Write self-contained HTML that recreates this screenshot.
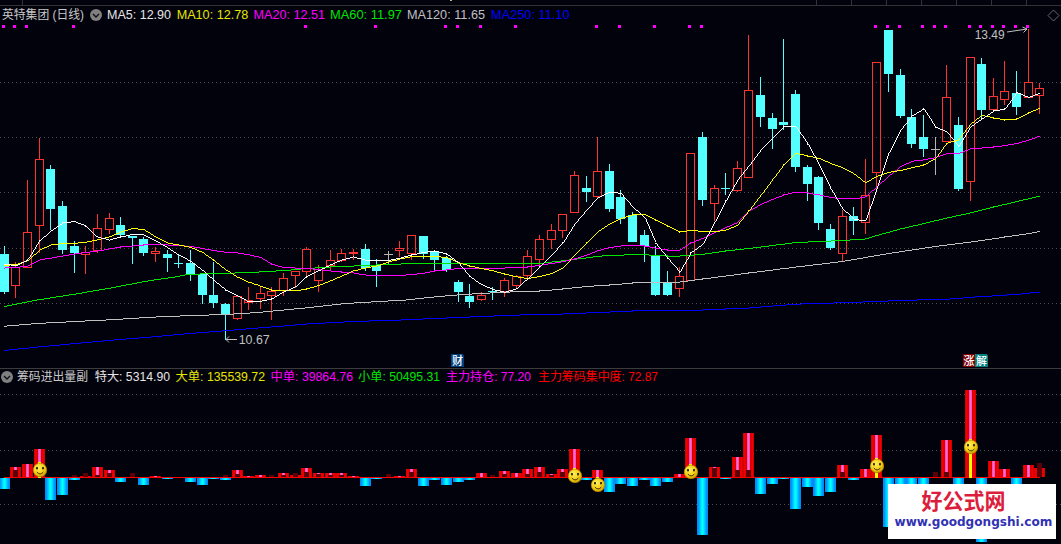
<!DOCTYPE html><html><head><meta charset="utf-8"><title>chart</title><style>
html,body{margin:0;padding:0;background:#02020d;overflow:hidden}
svg{display:block;position:absolute;left:0;top:0}
text{font-family:"Liberation Sans","Noto Sans CJK SC",sans-serif;font-size:12px}
.mk{font-size:11px;font-weight:500}
.wm1{font-family:"Liberation Sans","Noto Sans CJK SC",sans-serif;font-weight:bold;font-size:22px}
.wm2{font-family:"DejaVu Sans","Liberation Sans",sans-serif;font-weight:bold;font-size:12px}
</style></head><body>
<svg width="1061" height="544" viewBox="0 0 1061 544">
<defs>
<linearGradient id="gr" x1="0" x2="1" y1="0" y2="0"><stop offset="0.0000" stop-color="#d40000"/><stop offset="0.0909" stop-color="#d40000"/><stop offset="0.0909" stop-color="#f00000"/><stop offset="0.1818" stop-color="#f00000"/><stop offset="0.1818" stop-color="#e80000"/><stop offset="0.2727" stop-color="#e80000"/><stop offset="0.2727" stop-color="#d80000"/><stop offset="0.3636" stop-color="#d80000"/><stop offset="0.3636" stop-color="#ff50be"/><stop offset="0.4545" stop-color="#ff50be"/><stop offset="0.4545" stop-color="#ff6ed2"/><stop offset="0.5455" stop-color="#ff6ed2"/><stop offset="0.5455" stop-color="#ff50be"/><stop offset="0.6364" stop-color="#ff50be"/><stop offset="0.6364" stop-color="#d80000"/><stop offset="0.7273" stop-color="#d80000"/><stop offset="0.7273" stop-color="#e80000"/><stop offset="0.8182" stop-color="#e80000"/><stop offset="0.8182" stop-color="#f00000"/><stop offset="0.9091" stop-color="#f00000"/><stop offset="0.9091" stop-color="#d40000"/><stop offset="1.0000" stop-color="#d40000"/></linearGradient>
<linearGradient id="gc" x1="0" x2="1" y1="0" y2="0"><stop offset="0.0000" stop-color="#008cf5"/><stop offset="0.0909" stop-color="#008cf5"/><stop offset="0.0909" stop-color="#0096ff"/><stop offset="0.1818" stop-color="#0096ff"/><stop offset="0.1818" stop-color="#00b4ff"/><stop offset="0.2727" stop-color="#00b4ff"/><stop offset="0.2727" stop-color="#00d2ff"/><stop offset="0.3636" stop-color="#00d2ff"/><stop offset="0.3636" stop-color="#00f0ff"/><stop offset="0.4545" stop-color="#00f0ff"/><stop offset="0.4545" stop-color="#00ffff"/><stop offset="0.5455" stop-color="#00ffff"/><stop offset="0.5455" stop-color="#00f0ff"/><stop offset="0.6364" stop-color="#00f0ff"/><stop offset="0.6364" stop-color="#00d2ff"/><stop offset="0.7273" stop-color="#00d2ff"/><stop offset="0.7273" stop-color="#00b4ff"/><stop offset="0.8182" stop-color="#00b4ff"/><stop offset="0.8182" stop-color="#0096ff"/><stop offset="0.9091" stop-color="#0096ff"/><stop offset="0.9091" stop-color="#008cf5"/><stop offset="1.0000" stop-color="#008cf5"/></linearGradient>
<radialGradient id="gs" cx="0.4" cy="0.35" r="0.7"><stop offset="0" stop-color="#fff060"/><stop offset="0.6" stop-color="#f4cc10"/><stop offset="1" stop-color="#c89600"/></radialGradient>
<g id="sm"><circle cx="0" cy="0" r="7" fill="url(#gs)"/><circle cx="0" cy="0" r="6.7" fill="none" stroke="#7a6200" stroke-opacity="0.55" stroke-width="0.7"/><rect x="-4" y="-2.9" width="2" height="2.2" fill="#3a2c00"/><rect x="2" y="-2.9" width="2" height="2.2" fill="#3a2c00"/><path d="M-2.9 2.3 Q0.1 5.9 3.1 2.3" fill="none" stroke="#3a2c00" stroke-width="0.95" stroke-linecap="round"/></g>
</defs>
<rect x="0" y="0" width="1061" height="544" fill="#02020d"/>
<g shape-rendering="crispEdges">
<rect x="0" y="5" width="1061" height="1" fill="#333333"/>
<rect x="450" y="0" width="1" height="1" fill="#9ec4e6"/><rect x="451" y="0" width="1" height="1" fill="#d89a50"/>
<rect x="22" y="0" width="1" height="5" fill="#333333"/>
<rect x="816" y="0" width="1" height="5" fill="#333333"/>
<rect x="851" y="0" width="1" height="5" fill="#333333"/>
<rect x="886" y="0" width="1" height="5" fill="#333333"/>
<rect x="921" y="0" width="1" height="5" fill="#333333"/>
<rect x="956" y="0" width="1" height="5" fill="#333333"/>
<rect x="991" y="0" width="1" height="5" fill="#333333"/>
<rect x="1026" y="0" width="1" height="5" fill="#333333"/>
<rect x="0" y="368" width="1061" height="1" fill="#3c3c3c"/>
<line x1="0" y1="82.5" x2="1061" y2="82.5" stroke="#4c4c4c" stroke-width="1" stroke-dasharray="1 3"/>
<line x1="0" y1="137.5" x2="1061" y2="137.5" stroke="#4c4c4c" stroke-width="1" stroke-dasharray="1 3"/>
<line x1="0" y1="192.5" x2="1061" y2="192.5" stroke="#4c4c4c" stroke-width="1" stroke-dasharray="1 3"/>
<line x1="0" y1="248.5" x2="1061" y2="248.5" stroke="#4c4c4c" stroke-width="1" stroke-dasharray="1 3"/>
<line x1="0" y1="303.5" x2="1061" y2="303.5" stroke="#4c4c4c" stroke-width="1" stroke-dasharray="1 3"/>
<line x1="0" y1="394.5" x2="1061" y2="394.5" stroke="#4c4c4c" stroke-width="1" stroke-dasharray="1 3"/>
<line x1="0" y1="422.5" x2="1061" y2="422.5" stroke="#4c4c4c" stroke-width="1" stroke-dasharray="1 3"/>
<line x1="0" y1="450.5" x2="1061" y2="450.5" stroke="#4c4c4c" stroke-width="1" stroke-dasharray="1 3"/>
<line x1="0" y1="504.5" x2="1061" y2="504.5" stroke="#4c4c4c" stroke-width="1" stroke-dasharray="1 3"/>
</g>
<g shape-rendering="crispEdges">
<rect x="0" y="254" width="9" height="38" fill="#54ffff"/>
<rect x="4" y="246" width="1" height="8" fill="#54ffff"/>
<rect x="4" y="292" width="1" height="2" fill="#54ffff"/>
<rect x="11.5" y="267.5" width="8" height="18" fill="none" stroke="#ff3232" stroke-width="1"/>
<rect x="15" y="262" width="1" height="5" fill="#ff3232"/>
<rect x="15" y="286" width="1" height="12" fill="#ff3232"/>
<rect x="23.5" y="232.5" width="8" height="35" fill="none" stroke="#ff3232" stroke-width="1"/>
<rect x="27" y="180" width="1" height="52" fill="#ff3232"/>
<rect x="35.5" y="159.5" width="8" height="66" fill="none" stroke="#ff3232" stroke-width="1"/>
<rect x="39" y="138" width="1" height="21" fill="#ff3232"/>
<rect x="39" y="226" width="1" height="27" fill="#ff3232"/>
<rect x="46" y="169" width="9" height="40" fill="#54ffff"/>
<rect x="50" y="165" width="1" height="4" fill="#54ffff"/>
<rect x="50" y="209" width="1" height="21" fill="#54ffff"/>
<rect x="58" y="206" width="9" height="44" fill="#54ffff"/>
<rect x="62" y="201" width="1" height="5" fill="#54ffff"/>
<rect x="62" y="250" width="1" height="4" fill="#54ffff"/>
<rect x="70" y="246" width="9" height="7" fill="#54ffff"/>
<rect x="74" y="241" width="1" height="5" fill="#54ffff"/>
<rect x="74" y="253" width="1" height="20" fill="#54ffff"/>
<rect x="81.5" y="252.5" width="8" height="2" fill="none" stroke="#ff3232" stroke-width="1"/>
<rect x="85" y="246" width="1" height="6" fill="#ff3232"/>
<rect x="85" y="255" width="1" height="19" fill="#ff3232"/>
<rect x="93.5" y="228.5" width="8" height="22" fill="none" stroke="#ff3232" stroke-width="1"/>
<rect x="97" y="214" width="1" height="14" fill="#ff3232"/>
<rect x="97" y="251" width="1" height="2" fill="#ff3232"/>
<rect x="105.5" y="218.5" width="8" height="11" fill="none" stroke="#ff3232" stroke-width="1"/>
<rect x="109" y="213" width="1" height="5" fill="#ff3232"/>
<rect x="109" y="230" width="1" height="4" fill="#ff3232"/>
<rect x="116" y="225" width="9" height="10" fill="#54ffff"/>
<rect x="120" y="217" width="1" height="8" fill="#54ffff"/>
<rect x="120" y="235" width="1" height="1" fill="#54ffff"/>
<rect x="128" y="236" width="9" height="2" fill="#54ffff"/>
<rect x="132" y="238" width="1" height="26" fill="#54ffff"/>
<rect x="139" y="239" width="9" height="14" fill="#54ffff"/>
<rect x="143" y="237" width="1" height="2" fill="#54ffff"/>
<rect x="143" y="253" width="1" height="3" fill="#54ffff"/>
<rect x="151.5" y="251.5" width="8" height="2" fill="none" stroke="#ff3232" stroke-width="1"/>
<rect x="155" y="247" width="1" height="4" fill="#ff3232"/>
<rect x="155" y="254" width="1" height="8" fill="#ff3232"/>
<rect x="163" y="254" width="9" height="4" fill="#54ffff"/>
<rect x="167" y="250" width="1" height="4" fill="#54ffff"/>
<rect x="167" y="258" width="1" height="14" fill="#54ffff"/>
<rect x="178" y="255" width="1" height="13" fill="#54ffff"/>
<rect x="174" y="263" width="9" height="1" fill="#54ffff"/>
<rect x="186" y="263" width="9" height="11" fill="#54ffff"/>
<rect x="190" y="250" width="1" height="13" fill="#54ffff"/>
<rect x="190" y="274" width="1" height="7" fill="#54ffff"/>
<rect x="198" y="274" width="9" height="21" fill="#54ffff"/>
<rect x="202" y="295" width="1" height="9" fill="#54ffff"/>
<rect x="209" y="295" width="9" height="8" fill="#54ffff"/>
<rect x="213" y="262" width="1" height="33" fill="#54ffff"/>
<rect x="213" y="303" width="1" height="5" fill="#54ffff"/>
<rect x="221" y="304" width="9" height="10" fill="#54ffff"/>
<rect x="225" y="303" width="1" height="1" fill="#54ffff"/>
<rect x="225" y="314" width="1" height="26" fill="#54ffff"/>
<rect x="233.5" y="296.5" width="8" height="22" fill="none" stroke="#ff3232" stroke-width="1"/>
<rect x="237" y="319" width="1" height="1" fill="#ff3232"/>
<rect x="244.5" y="300.5" width="8" height="2" fill="none" stroke="#ff3232" stroke-width="1"/>
<rect x="248" y="287" width="1" height="13" fill="#ff3232"/>
<rect x="248" y="303" width="1" height="7" fill="#ff3232"/>
<rect x="256.5" y="293.5" width="8" height="5" fill="none" stroke="#ff3232" stroke-width="1"/>
<rect x="260" y="286" width="1" height="7" fill="#ff3232"/>
<rect x="260" y="299" width="1" height="10" fill="#ff3232"/>
<rect x="267.5" y="291.5" width="8" height="4" fill="none" stroke="#ff3232" stroke-width="1"/>
<rect x="271" y="287" width="1" height="4" fill="#ff3232"/>
<rect x="271" y="296" width="1" height="24" fill="#ff3232"/>
<rect x="279.5" y="278.5" width="8" height="12" fill="none" stroke="#ff3232" stroke-width="1"/>
<rect x="283" y="273" width="1" height="5" fill="#ff3232"/>
<rect x="283" y="291" width="1" height="5" fill="#ff3232"/>
<rect x="291.5" y="271.5" width="8" height="4" fill="none" stroke="#ff3232" stroke-width="1"/>
<rect x="295" y="276" width="1" height="12" fill="#ff3232"/>
<rect x="302.5" y="249.5" width="8" height="22" fill="none" stroke="#ff3232" stroke-width="1"/>
<rect x="306" y="247" width="1" height="2" fill="#ff3232"/>
<rect x="306" y="272" width="1" height="4" fill="#ff3232"/>
<rect x="314.5" y="269.5" width="8" height="11" fill="none" stroke="#ff3232" stroke-width="1"/>
<rect x="318" y="265" width="1" height="4" fill="#ff3232"/>
<rect x="318" y="281" width="1" height="11" fill="#ff3232"/>
<rect x="326.5" y="260.5" width="8" height="5" fill="none" stroke="#ff3232" stroke-width="1"/>
<rect x="330" y="250" width="1" height="10" fill="#ff3232"/>
<rect x="330" y="266" width="1" height="4" fill="#ff3232"/>
<rect x="337.5" y="253.5" width="8" height="7" fill="none" stroke="#ff3232" stroke-width="1"/>
<rect x="341" y="249" width="1" height="4" fill="#ff3232"/>
<rect x="341" y="261" width="1" height="1" fill="#ff3232"/>
<rect x="349.5" y="252.5" width="8" height="1" fill="none" stroke="#ff3232" stroke-width="1"/>
<rect x="353" y="249" width="1" height="3" fill="#ff3232"/>
<rect x="353" y="254" width="1" height="6" fill="#ff3232"/>
<rect x="361" y="249" width="9" height="19" fill="#54ffff"/>
<rect x="365" y="244" width="1" height="5" fill="#54ffff"/>
<rect x="365" y="268" width="1" height="3" fill="#54ffff"/>
<rect x="372" y="265" width="9" height="6" fill="#54ffff"/>
<rect x="376" y="259" width="1" height="6" fill="#54ffff"/>
<rect x="376" y="271" width="1" height="16" fill="#54ffff"/>
<rect x="388" y="251" width="1" height="13" fill="#b4b4b4"/>
<rect x="384" y="254" width="9" height="1" fill="#b4b4b4"/>
<rect x="395.5" y="248.5" width="8" height="2" fill="none" stroke="#ff3232" stroke-width="1"/>
<rect x="399" y="241" width="1" height="7" fill="#ff3232"/>
<rect x="399" y="251" width="1" height="6" fill="#ff3232"/>
<rect x="407.5" y="235.5" width="8" height="18" fill="none" stroke="#ff3232" stroke-width="1"/>
<rect x="411" y="254" width="1" height="6" fill="#ff3232"/>
<rect x="419" y="236" width="9" height="18" fill="#54ffff"/>
<rect x="423" y="254" width="1" height="5" fill="#54ffff"/>
<rect x="430" y="252" width="9" height="8" fill="#54ffff"/>
<rect x="434" y="250" width="1" height="2" fill="#54ffff"/>
<rect x="434" y="260" width="1" height="11" fill="#54ffff"/>
<rect x="442" y="258" width="9" height="12" fill="#54ffff"/>
<rect x="446" y="256" width="1" height="2" fill="#54ffff"/>
<rect x="446" y="270" width="1" height="2" fill="#54ffff"/>
<rect x="454" y="282" width="9" height="10" fill="#54ffff"/>
<rect x="458" y="280" width="1" height="2" fill="#54ffff"/>
<rect x="458" y="292" width="1" height="10" fill="#54ffff"/>
<rect x="465" y="296" width="9" height="6" fill="#54ffff"/>
<rect x="469" y="284" width="1" height="12" fill="#54ffff"/>
<rect x="469" y="302" width="1" height="6" fill="#54ffff"/>
<rect x="477.5" y="295.5" width="8" height="4" fill="none" stroke="#ff3232" stroke-width="1"/>
<rect x="481" y="292" width="1" height="3" fill="#ff3232"/>
<rect x="481" y="300" width="1" height="1" fill="#ff3232"/>
<rect x="492" y="287" width="1" height="13" fill="#54ffff"/>
<rect x="488" y="291" width="9" height="1" fill="#54ffff"/>
<rect x="500.5" y="280.5" width="8" height="11" fill="none" stroke="#ff3232" stroke-width="1"/>
<rect x="504" y="278" width="1" height="2" fill="#ff3232"/>
<rect x="504" y="292" width="1" height="5" fill="#ff3232"/>
<rect x="512.5" y="276.5" width="8" height="9" fill="none" stroke="#ff3232" stroke-width="1"/>
<rect x="516" y="275" width="1" height="1" fill="#ff3232"/>
<rect x="516" y="286" width="1" height="3" fill="#ff3232"/>
<rect x="523.5" y="256.5" width="8" height="19" fill="none" stroke="#ff3232" stroke-width="1"/>
<rect x="527" y="250" width="1" height="6" fill="#ff3232"/>
<rect x="527" y="276" width="1" height="3" fill="#ff3232"/>
<rect x="535.5" y="239.5" width="8" height="20" fill="none" stroke="#ff3232" stroke-width="1"/>
<rect x="539" y="235" width="1" height="4" fill="#ff3232"/>
<rect x="539" y="260" width="1" height="6" fill="#ff3232"/>
<rect x="547.5" y="230.5" width="8" height="9" fill="none" stroke="#ff3232" stroke-width="1"/>
<rect x="551" y="224" width="1" height="6" fill="#ff3232"/>
<rect x="551" y="240" width="1" height="9" fill="#ff3232"/>
<rect x="558.5" y="214.5" width="8" height="16" fill="none" stroke="#ff3232" stroke-width="1"/>
<rect x="562" y="231" width="1" height="7" fill="#ff3232"/>
<rect x="570.5" y="175.5" width="8" height="37" fill="none" stroke="#ff3232" stroke-width="1"/>
<rect x="574" y="171" width="1" height="4" fill="#ff3232"/>
<rect x="582" y="188" width="9" height="4" fill="#54ffff"/>
<rect x="586" y="176" width="1" height="12" fill="#54ffff"/>
<rect x="586" y="192" width="1" height="10" fill="#54ffff"/>
<rect x="593.5" y="171.5" width="8" height="25" fill="none" stroke="#ff3232" stroke-width="1"/>
<rect x="597" y="137" width="1" height="34" fill="#ff3232"/>
<rect x="597" y="197" width="1" height="2" fill="#ff3232"/>
<rect x="605" y="171" width="9" height="38" fill="#54ffff"/>
<rect x="609" y="164" width="1" height="7" fill="#54ffff"/>
<rect x="609" y="209" width="1" height="3" fill="#54ffff"/>
<rect x="616" y="197" width="9" height="22" fill="#54ffff"/>
<rect x="620" y="190" width="1" height="7" fill="#54ffff"/>
<rect x="620" y="219" width="1" height="5" fill="#54ffff"/>
<rect x="628" y="215" width="9" height="27" fill="#54ffff"/>
<rect x="632" y="212" width="1" height="3" fill="#54ffff"/>
<rect x="640" y="235" width="9" height="11" fill="#54ffff"/>
<rect x="644" y="230" width="1" height="5" fill="#54ffff"/>
<rect x="644" y="246" width="1" height="16" fill="#54ffff"/>
<rect x="651" y="256" width="9" height="39" fill="#54ffff"/>
<rect x="655" y="246" width="1" height="10" fill="#54ffff"/>
<rect x="655" y="295" width="1" height="1" fill="#54ffff"/>
<rect x="663" y="282" width="9" height="13" fill="#54ffff"/>
<rect x="667" y="271" width="1" height="11" fill="#54ffff"/>
<rect x="667" y="295" width="1" height="1" fill="#54ffff"/>
<rect x="675.5" y="276.5" width="8" height="12" fill="none" stroke="#ff3232" stroke-width="1"/>
<rect x="679" y="267" width="1" height="9" fill="#ff3232"/>
<rect x="679" y="289" width="1" height="8" fill="#ff3232"/>
<rect x="686.5" y="153.5" width="8" height="127" fill="none" stroke="#ff3232" stroke-width="1"/>
<rect x="698" y="137" width="9" height="63" fill="#54ffff"/>
<rect x="702" y="132" width="1" height="5" fill="#54ffff"/>
<rect x="702" y="200" width="1" height="6" fill="#54ffff"/>
<rect x="710.5" y="188.5" width="8" height="15" fill="none" stroke="#ff3232" stroke-width="1"/>
<rect x="714" y="185" width="1" height="3" fill="#ff3232"/>
<rect x="714" y="204" width="1" height="17" fill="#ff3232"/>
<rect x="725" y="173" width="1" height="22" fill="#54ffff"/>
<rect x="721" y="188" width="9" height="1" fill="#54ffff"/>
<rect x="733.5" y="168.5" width="8" height="22" fill="none" stroke="#ff3232" stroke-width="1"/>
<rect x="737" y="161" width="1" height="7" fill="#ff3232"/>
<rect x="737" y="191" width="1" height="1" fill="#ff3232"/>
<rect x="744.5" y="90.5" width="8" height="87" fill="none" stroke="#ff3232" stroke-width="1"/>
<rect x="748" y="35" width="1" height="55" fill="#ff3232"/>
<rect x="756" y="95" width="9" height="22" fill="#54ffff"/>
<rect x="760" y="77" width="1" height="18" fill="#54ffff"/>
<rect x="760" y="117" width="1" height="10" fill="#54ffff"/>
<rect x="768" y="118" width="9" height="11" fill="#54ffff"/>
<rect x="772" y="113" width="1" height="5" fill="#54ffff"/>
<rect x="772" y="129" width="1" height="20" fill="#54ffff"/>
<rect x="779" y="122" width="9" height="3" fill="#54ffff"/>
<rect x="783" y="39" width="1" height="83" fill="#54ffff"/>
<rect x="783" y="125" width="1" height="5" fill="#54ffff"/>
<rect x="791" y="94" width="9" height="73" fill="#54ffff"/>
<rect x="795" y="90" width="1" height="4" fill="#54ffff"/>
<rect x="795" y="167" width="1" height="5" fill="#54ffff"/>
<rect x="803" y="167" width="9" height="17" fill="#54ffff"/>
<rect x="807" y="165" width="1" height="2" fill="#54ffff"/>
<rect x="807" y="184" width="1" height="17" fill="#54ffff"/>
<rect x="814" y="177" width="9" height="46" fill="#54ffff"/>
<rect x="818" y="176" width="1" height="1" fill="#54ffff"/>
<rect x="818" y="223" width="1" height="7" fill="#54ffff"/>
<rect x="826" y="229" width="9" height="19" fill="#54ffff"/>
<rect x="830" y="224" width="1" height="5" fill="#54ffff"/>
<rect x="830" y="248" width="1" height="2" fill="#54ffff"/>
<rect x="838.5" y="216.5" width="8" height="37" fill="none" stroke="#ff3232" stroke-width="1"/>
<rect x="842" y="210" width="1" height="6" fill="#ff3232"/>
<rect x="842" y="254" width="1" height="7" fill="#ff3232"/>
<rect x="849" y="216" width="9" height="5" fill="#54ffff"/>
<rect x="853" y="207" width="1" height="9" fill="#54ffff"/>
<rect x="853" y="221" width="1" height="14" fill="#54ffff"/>
<rect x="861.5" y="195.5" width="8" height="27" fill="none" stroke="#ff3232" stroke-width="1"/>
<rect x="865" y="159" width="1" height="36" fill="#ff3232"/>
<rect x="865" y="223" width="1" height="11" fill="#ff3232"/>
<rect x="872.5" y="62.5" width="8" height="110" fill="none" stroke="#ff3232" stroke-width="1"/>
<rect x="876" y="173" width="1" height="19" fill="#ff3232"/>
<rect x="884" y="30" width="9" height="44" fill="#54ffff"/>
<rect x="888" y="74" width="1" height="18" fill="#54ffff"/>
<rect x="896" y="75" width="9" height="41" fill="#54ffff"/>
<rect x="900" y="69" width="1" height="6" fill="#54ffff"/>
<rect x="900" y="116" width="1" height="2" fill="#54ffff"/>
<rect x="907" y="117" width="9" height="27" fill="#54ffff"/>
<rect x="911" y="109" width="1" height="8" fill="#54ffff"/>
<rect x="911" y="144" width="1" height="4" fill="#54ffff"/>
<rect x="919" y="137" width="9" height="12" fill="#54ffff"/>
<rect x="923" y="115" width="1" height="22" fill="#54ffff"/>
<rect x="923" y="149" width="1" height="8" fill="#54ffff"/>
<rect x="935" y="137" width="1" height="38" fill="#b4b4b4"/>
<rect x="931" y="149" width="9" height="1" fill="#b4b4b4"/>
<rect x="942.5" y="97.5" width="8" height="44" fill="none" stroke="#ff3232" stroke-width="1"/>
<rect x="946" y="65" width="1" height="32" fill="#ff3232"/>
<rect x="954" y="125" width="9" height="64" fill="#54ffff"/>
<rect x="958" y="117" width="1" height="8" fill="#54ffff"/>
<rect x="958" y="189" width="1" height="2" fill="#54ffff"/>
<rect x="966.5" y="57.5" width="8" height="124" fill="none" stroke="#ff3232" stroke-width="1"/>
<rect x="970" y="182" width="1" height="19" fill="#ff3232"/>
<rect x="977" y="64" width="9" height="46" fill="#54ffff"/>
<rect x="981" y="58" width="1" height="6" fill="#54ffff"/>
<rect x="981" y="110" width="1" height="10" fill="#54ffff"/>
<rect x="989.5" y="96.5" width="8" height="13" fill="none" stroke="#ff3232" stroke-width="1"/>
<rect x="993" y="78" width="1" height="18" fill="#ff3232"/>
<rect x="1000.5" y="91.5" width="8" height="8" fill="none" stroke="#ff3232" stroke-width="1"/>
<rect x="1004" y="61" width="1" height="30" fill="#ff3232"/>
<rect x="1004" y="100" width="1" height="5" fill="#ff3232"/>
<rect x="1012" y="93" width="9" height="14" fill="#54ffff"/>
<rect x="1016" y="71" width="1" height="22" fill="#54ffff"/>
<rect x="1016" y="107" width="1" height="8" fill="#54ffff"/>
<rect x="1024.5" y="82.5" width="8" height="15" fill="none" stroke="#ff3232" stroke-width="1"/>
<rect x="1028" y="29" width="1" height="53" fill="#ff3232"/>
<rect x="1035.5" y="88.5" width="8" height="7" fill="none" stroke="#ff3232" stroke-width="1"/>
<rect x="1039" y="83" width="1" height="5" fill="#ff3232"/>
<rect x="1039" y="96" width="1" height="18" fill="#ff3232"/>
</g>
<path d="M271 326h13v1h-13zM196 332h13v1h-13zM773 305h13v1h-13zM162 335h11v1h-11zM725 308h24v1h-24zM184 333h12v1h-12zM520 314h43v1h-43zM423 318h24v1h-24zM834 302h29v1h-29zM632 310h71v1h-71zM9 349h9v1h-9zM151 336h11v1h-11zM81 342h11v1h-11zM401 319h22v1h-22zM888 300h29v1h-29zM470 316h24v1h-24zM863 301h25v1h-25zM173 334h11v1h-11zM103 340h11v1h-11zM258 327h13v1h-13zM447 317h23v1h-23zM563 313h23v1h-23zM703 309h23v1h-23zM38 346h11v1h-11zM494 315h26v1h-26zM325 322h19v1h-19zM801 303h33v1h-33zM1021 293h9v1h-9zM284 325h11v1h-11zM209 331h13v1h-13zM963 297h12v1h-12zM786 304h15v1h-15zM246 328h12v1h-12zM610 311h23v1h-23zM749 307h12v1h-12zM369 320h32v1h-32zM18 348h11v1h-11zM992 295h15v1h-15zM950 298h13v1h-13zM222 330h12v1h-12zM917 299h33v1h-33zM139 337h12v1h-12zM586 312h24v1h-24zM344 321h25v1h-25zM70 343h11v1h-11zM295 324h12v1h-12zM126 338h13v1h-13zM761 306h12v1h-12zM975 296h17v1h-17zM92 341h11v1h-11zM29 347h9v1h-9zM60 344h10v1h-10zM1007 294h14v1h-14zM307 323h18v1h-18zM234 329h12v1h-12zM49 345h11v1h-11zM1030 292h10v1h-10zM114 339h12v1h-12zM4 350h5v1h-5z" fill="#0000ff" shape-rendering="crispEdges"/>
<path d="M609 284h13v1h-13zM314 306h9v1h-9zM180 315h29v1h-29zM250 312h13v1h-13zM284 309h10v1h-10zM434 296h11v1h-11zM718 276h8v1h-8zM354 302h17v1h-17zM46 322h20v1h-20zM947 244h8v1h-8zM457 294h15v1h-15zM632 282h48v1h-48zM874 255h6v1h-6zM424 297h10v1h-10zM582 286h12v1h-12zM845 260h6v1h-6zM622 283h11v1h-11zM688 280h7v1h-7zM66 321h19v1h-19zM263 311h10v1h-10zM388 300h18v1h-18zM552 289h11v1h-11zM822 263h8v1h-8zM919 248h6v1h-6zM19 324h12v1h-12zM490 292h20v1h-20zM209 314h25v1h-25zM371 301h17v1h-17zM932 246h7v1h-7zM1037 231h3v1h-3zM156 316h24v1h-24zM332 304h9v1h-9zM472 293h18v1h-18zM868 256h6v1h-6zM880 254h6v1h-6zM985 239h7v1h-7zM106 319h17v1h-17zM734 274h7v1h-7zM539 290h13v1h-13zM813 264h9v1h-9zM905 250h7v1h-7zM925 247h7v1h-7zM510 291h30v1h-30zM726 275h8v1h-8zM139 317h17v1h-17zM955 243h8v1h-8zM971 241h7v1h-7zM123 318h16v1h-16zM999 237h6v1h-6zM773 269h7v1h-7zM562 288h10v1h-10zM273 310h11v1h-11zM830 262h8v1h-8zM594 285h16v1h-16zM892 252h7v1h-7zM939 245h8v1h-8zM234 313h16v1h-16zM963 242h8v1h-8zM711 277h7v1h-7zM4 326h3v1h-3zM341 303h13v1h-13zM992 238h7v1h-7zM741 273h8v1h-8zM445 295h12v1h-12zM1004 236h8v1h-8zM415 298h9v1h-9zM572 287h10v1h-10zM838 261h7v1h-7zM680 281h8v1h-8zM695 279h8v1h-8zM323 305h9v1h-9zM7 325h12v1h-12zM863 257h5v1h-5zM978 240h7v1h-7zM294 308h11v1h-11zM748 272h9v1h-9zM85 320h21v1h-21zM780 268h9v1h-9zM899 251h6v1h-6zM305 307h9v1h-9zM765 270h8v1h-8zM31 323h15v1h-15zM789 267h7v1h-7zM702 278h9v1h-9zM757 271h8v1h-8zM406 299h9v1h-9zM805 265h8v1h-8zM1026 233h6v1h-6zM857 258h6v1h-6zM796 266h9v1h-9zM912 249h7v1h-7zM1019 234h7v1h-7zM851 259h6v1h-6zM886 253h6v1h-6zM1012 235h7v1h-7zM1032 232h5v1h-5z" fill="#c0c0c0" shape-rendering="crispEdges"/>
<path d="M602 255h22v1h-22zM649 255h19v1h-19zM680 255h14v1h-14zM1023 199h5v1h-5zM376 264h25v1h-25zM886 232h4v1h-4zM993 206h5v1h-5zM401 263h143v1h-143zM961 214h5v1h-5zM725 250h10v1h-10zM99 289h6v1h-6zM185 274h15v1h-15zM137 282h5v1h-5zM69 294h7v1h-7zM831 240h19v1h-19zM761 246h8v1h-8zM1007 203h4v1h-4zM808 241h23v1h-23zM986 208h4v1h-4zM200 273h35v1h-35zM624 254h25v1h-25zM694 254h11v1h-11zM315 267h15v1h-15zM850 239h15v1h-15zM175 276h5v1h-5zM934 220h5v1h-5zM301 268h14v1h-14zM126 284h6v1h-6zM259 271h17v1h-17zM586 257h7v1h-7zM148 280h6v1h-6zM161 278h7v1h-7zM22 302h5v1h-5zM330 266h24v1h-24zM593 256h9v1h-9zM667 256h13v1h-13zM897 229h3v1h-3zM76 293h6v1h-6zM943 218h4v1h-4zM154 279h7v1h-7zM27 301h5v1h-5zM235 272h24v1h-24zM785 243h7v1h-7zM93 290h6v1h-6zM577 258h9v1h-9zM719 251h7v1h-7zM44 298h6v1h-6zM132 283h5v1h-5zM792 242h16v1h-16zM7 305h5v1h-5zM905 227h4v1h-4zM569 259h8v1h-8zM354 265h22v1h-22zM705 253h7v1h-7zM930 221h4v1h-4zM121 285h5v1h-5zM291 269h10v1h-10zM970 212h4v1h-4zM735 249h9v1h-9zM947 217h5v1h-5zM552 261h9v1h-9zM142 281h6v1h-6zM893 230h4v1h-4zM869 237h3v1h-3zM50 297h6v1h-6zM744 248h9v1h-9zM974 211h4v1h-4zM776 244h9v1h-9zM105 288h6v1h-6zM712 252h7v1h-7zM87 291h6v1h-6zM956 215h5v1h-5zM1032 197h4v1h-4zM56 296h7v1h-7zM769 245h7v1h-7zM4 306h3v1h-3zM561 260h8v1h-8zM900 228h5v1h-5zM918 224h4v1h-4zM276 270h15v1h-15zM116 286h5v1h-5zM753 247h8v1h-8zM544 262h8v1h-8zM882 233h4v1h-4zM63 295h6v1h-6zM1002 204h5v1h-5zM1015 201h4v1h-4zM17 303h5v1h-5zM168 277h7v1h-7zM1028 198h4v1h-4zM37 299h7v1h-7zM990 207h4v1h-4zM180 275h5v1h-5zM111 287h5v1h-5zM875 235h4v1h-4zM939 219h4v1h-4zM1036 196h4v1h-4zM998 205h4v1h-4zM12 304h5v1h-5zM978 210h4v1h-4zM865 238h4v1h-4zM32 300h5v1h-5zM926 222h4v1h-4zM966 213h4v1h-4zM1011 202h4v1h-4zM913 225h5v1h-5zM82 292h5v1h-5zM922 223h4v1h-4zM909 226h4v1h-4zM879 234h3v1h-3zM982 209h4v1h-4zM1019 200h4v1h-4zM952 216h4v1h-4zM890 231h3v1h-3zM872 236h3v1h-3z" fill="#00e600" shape-rendering="crispEdges"/>
<path d="M708 235h2v1h-2zM331 271h11v1h-11zM430 271h5v1h-5zM322 270h9v1h-9zM434 270h12v1h-12zM143 244h25v1h-25zM968 149h2v1h-2zM341 272h13v1h-13zM425 272h5v1h-5zM133 245h11v1h-11zM168 245h17v1h-17zM621 245h24v1h-24zM686 245h2v1h-2zM120 246h13v1h-13zM185 246h9v1h-9zM614 246h7v1h-7zM644 246h6v1h-6zM104 249h5v1h-5zM205 249h6v1h-6zM601 249h3v1h-3zM661 249h7v1h-7zM680 249h2v1h-2zM295 268h18v1h-18zM454 268h51v1h-51zM882 181h2v1h-2zM872 190h2v1h-2zM45 258h7v1h-7zM574 258h4v1h-4zM1019 142h3v1h-3zM90 251h7v1h-7zM217 251h7v1h-7zM595 251h2v1h-2zM792 192h16v1h-16zM359 274h7v1h-7zM406 274h11v1h-11zM946 153h14v1h-14zM727 226h3v1h-3zM82 252h8v1h-8zM224 252h14v1h-14zM592 252h3v1h-3zM366 275h40v1h-40zM20 266h8v1h-8zM278 266h4v1h-4zM527 266h8v1h-8zM928 158h6v1h-6zM779 196h3v1h-3zM824 196h5v1h-5zM865 196h2v1h-2zM354 273h5v1h-5zM417 273h8v1h-8zM63 255h6v1h-6zM250 255h4v1h-4zM584 255h3v1h-3zM115 247h6v1h-6zM194 247h6v1h-6zM608 247h6v1h-6zM650 247h5v1h-5zM683 247h2v1h-2zM5 267h15v1h-15zM282 267h13v1h-13zM505 267h23v1h-23zM313 269h9v1h-9zM446 269h8v1h-8zM718 230h3v1h-3zM1026 140h3v1h-3zM1002 145h6v1h-6zM783 194h5v1h-5zM813 194h7v1h-7zM699 239h2v1h-2zM970 148h12v1h-12zM36 261h2v1h-2zM561 261h5v1h-5zM774 198h2v1h-2zM835 198h25v1h-25zM764 202h3v1h-3zM937 156h3v1h-3zM769 200h2v1h-2zM97 250h7v1h-7zM211 250h6v1h-6zM597 250h4v1h-4zM667 250h13v1h-13zM776 197h3v1h-3zM829 197h6v1h-6zM860 197h5v1h-5zM1032 138h3v1h-3zM1014 143h5v1h-5zM909 162h2v1h-2zM963 151h2v1h-2zM38 260h2v1h-2zM265 260h2v1h-2zM566 260h4v1h-4zM69 254h6v1h-6zM244 254h6v1h-6zM587 254h3v1h-3zM109 248h6v1h-6zM200 248h5v1h-5zM604 248h4v1h-4zM655 248h6v1h-6zM982 147h12v1h-12zM57 256h6v1h-6zM254 256h5v1h-5zM581 256h3v1h-3zM723 228h2v1h-2zM914 160h9v1h-9zM694 241h2v1h-2zM782 195h2v1h-2zM820 195h4v1h-4zM30 264h2v1h-2zM271 264h4v1h-4zM542 264h6v1h-6zM1008 144h6v1h-6zM75 253h7v1h-7zM238 253h6v1h-6zM590 253h2v1h-2zM734 223h3v1h-3zM923 159h5v1h-5zM714 232h2v1h-2zM52 257h5v1h-5zM259 257h3v1h-3zM578 257h3v1h-3zM993 146h9v1h-9zM34 262h2v1h-2zM268 262h2v1h-2zM555 262h6v1h-6zM890 174h2v1h-2zM943 154h3v1h-3zM710 234h2v1h-2zM32 263h2v1h-2zM270 263h2v1h-2zM548 263h7v1h-7zM40 259h5v1h-5zM263 259h2v1h-2zM570 259h5v1h-5zM28 265h2v1h-2zM275 265h3v1h-3zM535 265h7v1h-7zM725 227h2v1h-2zM1022 141h4v1h-4zM767 201h2v1h-2zM906 163h3v1h-3zM1035 137h2v1h-2zM706 236h2v1h-2zM771 199h3v1h-3zM902 165h2v1h-2zM788 193h4v1h-4zM808 193h5v1h-5zM721 229h2v1h-2zM911 161h3v1h-3zM965 150h3v1h-3zM716 231h2v1h-2zM762 203h2v1h-2zM934 157h3v1h-3zM760 204h2v1h-2zM690 242h4v1h-4zM732 224h2v1h-2zM1029 139h3v1h-3zM701 238h3v1h-3zM904 164h2v1h-2zM712 233h2v1h-2zM758 205h2v1h-2zM755 207h2v1h-2zM704 237h2v1h-2zM900 166h2v1h-2zM1037 136h3v1h-3zM876 186h2v1h-2zM751 209h2v1h-2zM689 243h2v1h-2zM730 225h2v1h-2zM753 208h2v1h-2zM960 152h3v1h-3zM696 240h3v1h-3zM895 170h2v1h-2zM749 210h2v1h-2zM940 155h3v1h-3zM688 244h1v1h-1zM685 246h1v1h-1zM4 268h1v1h-1zM262 258h1v1h-1zM870 192h1v1h-1zM876 187h1v1h-1zM868 194h1v1h-1zM267 261h1v1h-1zM738 221h1v1h-1zM682 248h1v1h-1zM867 195h1v1h-1zM757 206h1v1h-1zM887 177h1v1h-1zM748 211h1v1h-1zM745 214h1v1h-1zM878 185h1v1h-1zM871 191h1v1h-1zM894 171h1v1h-1zM898 168h1v1h-1zM869 193h1v1h-1zM885 179h1v1h-1zM740 219h1v1h-1zM889 175h1v1h-1zM893 172h1v1h-1zM747 212h1v1h-1zM880 183h1v1h-1zM884 180h1v1h-1zM742 217h1v1h-1zM875 188h1v1h-1zM899 167h1v1h-1zM737 222h1v1h-1zM886 178h1v1h-1zM879 184h1v1h-1zM744 215h1v1h-1zM741 218h1v1h-1zM897 169h1v1h-1zM874 189h1v1h-1zM739 220h1v1h-1zM888 176h1v1h-1zM892 173h1v1h-1zM881 182h1v1h-1zM746 213h1v1h-1zM743 216h1v1h-1z" fill="#ff00ff" shape-rendering="crispEdges"/>
<path d="M869 180h2v1h-2zM616 220h2v1h-2zM655 220h3v1h-3zM59 243h19v1h-19zM168 243h5v1h-5zM18 263h3v1h-3zM217 263h2v1h-2zM383 263h3v1h-3zM460 263h3v1h-3zM244 280h2v1h-2zM330 280h3v1h-3zM271 290h30v1h-30zM222 267h2v1h-2zM366 267h5v1h-5zM475 267h4v1h-4zM27 260h2v1h-2zM213 260h2v1h-2zM392 260h5v1h-5zM453 260h2v1h-2zM838 166h3v1h-3zM915 166h5v1h-5zM977 118h2v1h-2zM993 118h7v1h-7zM1016 118h3v1h-3zM410 256h31v1h-31zM49 245h2v1h-2zM179 245h5v1h-5zM349 272h2v1h-2zM497 272h4v1h-4zM553 272h2v1h-2zM4 265h6v1h-6zM377 265h3v1h-3zM467 265h3v1h-3zM361 268h5v1h-5zM479 268h5v1h-5zM561 268h2v1h-2zM199 251h3v1h-3zM78 242h9v1h-9zM166 242h2v1h-2zM586 242h2v1h-2zM237 277h3v1h-3zM337 277h3v1h-3zM518 277h6v1h-6zM531 277h6v1h-6zM248 282h4v1h-4zM325 282h3v1h-3zM1000 119h17v1h-17zM981 115h4v1h-4zM1023 115h2v1h-2zM269 289h3v1h-3zM301 289h6v1h-6zM209 257h2v1h-2zM405 257h5v1h-5zM441 257h7v1h-7zM884 173h3v1h-3zM242 279h2v1h-2zM333 279h2v1h-2zM841 167h2v1h-2zM911 167h4v1h-4zM21 262h3v1h-3zM386 262h3v1h-3zM457 262h3v1h-3zM212 259h2v1h-2zM397 259h3v1h-3zM450 259h3v1h-3zM955 140h4v1h-4zM97 239h4v1h-4zM160 239h2v1h-2zM612 222h2v1h-2zM660 222h2v1h-2zM400 258h5v1h-5zM448 258h2v1h-2zM799 154h5v1h-5zM847 170h2v1h-2zM897 170h6v1h-6zM830 163h2v1h-2zM926 163h2v1h-2zM821 159h2v1h-2zM933 159h2v1h-2zM124 230h4v1h-4zM599 230h2v1h-2zM676 230h2v1h-2zM687 230h11v1h-11zM720 230h6v1h-6zM234 275h2v1h-2zM342 275h2v1h-2zM509 275h4v1h-4zM542 275h4v1h-4zM263 287h3v1h-3zM310 287h4v1h-4zM618 219h2v1h-2zM654 219h2v1h-2zM849 171h2v1h-2zM891 171h6v1h-6zM614 221h2v1h-2zM658 221h2v1h-2zM24 261h3v1h-3zM389 261h3v1h-3zM455 261h2v1h-2zM623 217h3v1h-3zM650 217h2v1h-2zM121 231h3v1h-3zM146 231h2v1h-2zM678 231h9v1h-9zM698 231h22v1h-22zM105 237h4v1h-4zM156 237h2v1h-2zM807 156h6v1h-6zM863 181h2v1h-2zM867 181h2v1h-2zM946 143h2v1h-2zM344 274h3v1h-3zM504 274h5v1h-5zM546 274h4v1h-4zM252 283h2v1h-2zM323 283h2v1h-2zM34 254h2v1h-2zM371 266h6v1h-6zM469 266h6v1h-6zM865 182h2v1h-2zM231 273h2v1h-2zM347 273h2v1h-2zM501 273h4v1h-4zM550 273h3v1h-3zM632 214h14v1h-14zM254 284h4v1h-4zM320 284h3v1h-3zM985 116h5v1h-5zM1021 116h2v1h-2zM630 215h3v1h-3zM646 215h2v1h-2zM42 248h2v1h-2zM192 248h3v1h-3zM951 141h4v1h-4zM119 232h2v1h-2zM148 232h2v1h-2zM878 175h3v1h-3zM608 224h2v1h-2zM664 224h2v1h-2zM51 244h8v1h-8zM173 244h6v1h-6zM128 229h3v1h-3zM138 229h7v1h-7zM674 229h2v1h-2zM726 229h3v1h-3zM116 233h3v1h-3zM845 169h2v1h-2zM903 169h4v1h-4zM10 264h8v1h-8zM380 264h3v1h-3zM463 264h4v1h-4zM825 161h3v1h-3zM929 161h2v1h-2zM340 276h2v1h-2zM513 276h5v1h-5zM537 276h5v1h-5zM813 157h4v1h-4zM358 269h3v1h-3zM484 269h5v1h-5zM559 269h2v1h-2zM795 153h4v1h-4zM226 270h2v1h-2zM353 270h5v1h-5zM489 270h5v1h-5zM557 270h2v1h-2zM670 227h2v1h-2zM731 227h3v1h-3zM87 241h5v1h-5zM164 241h2v1h-2zM1033 110h3v1h-3zM260 286h3v1h-3zM314 286h3v1h-3zM258 285h2v1h-2zM317 285h3v1h-3zM114 234h2v1h-2zM151 234h2v1h-2zM112 235h2v1h-2zM872 178h2v1h-2zM131 228h7v1h-7zM602 228h2v1h-2zM672 228h2v1h-2zM729 228h2v1h-2zM44 247h3v1h-3zM189 247h3v1h-3zM92 240h5v1h-5zM162 240h2v1h-2zM610 223h2v1h-2zM662 223h2v1h-2zM990 117h4v1h-4zM1019 117h2v1h-2zM972 122h2v1h-2zM266 288h3v1h-3zM306 288h4v1h-4zM246 281h2v1h-2zM328 281h2v1h-2zM835 165h3v1h-3zM920 165h4v1h-4zM854 174h2v1h-2zM881 174h3v1h-3zM851 172h2v1h-2zM887 172h4v1h-4zM817 158h4v1h-4zM101 238h4v1h-4zM158 238h2v1h-2zM1028 112h3v1h-3zM47 246h2v1h-2zM184 246h5v1h-5zM948 142h3v1h-3zM783 164h2v1h-2zM832 164h3v1h-3zM923 164h3v1h-3zM1025 114h2v1h-2zM40 249h2v1h-2zM195 249h2v1h-2zM240 278h2v1h-2zM335 278h2v1h-2zM524 278h7v1h-7zM843 168h2v1h-2zM907 168h4v1h-4zM109 236h3v1h-3zM154 236h2v1h-2zM828 162h2v1h-2zM206 255h2v1h-2zM666 225h2v1h-2zM736 225h2v1h-2zM748 210h2v1h-2zM626 216h4v1h-4zM648 216h2v1h-2zM823 160h2v1h-2zM931 160h2v1h-2zM620 218h3v1h-3zM652 218h2v1h-2zM202 252h2v1h-2zM228 271h2v1h-2zM351 271h2v1h-2zM494 271h3v1h-3zM555 271h2v1h-2zM605 226h2v1h-2zM667 226h3v1h-3zM734 226h2v1h-2zM858 177h2v1h-2zM874 177h2v1h-2zM804 155h4v1h-4zM876 176h2v1h-2zM1031 111h2v1h-2zM1027 113h2v1h-2zM1036 109h2v1h-2zM197 250h2v1h-2zM1038 108h2v1h-2zM772 179h1v2h-1zM862 180h1v1h-1zM741 220h1v1h-1zM586 243h1v1h-1zM567 263h1v1h-1zM563 267h1v1h-1zM570 259h1v2h-1zM782 166h1v2h-1zM765 189h1v1h-1zM32 256h1v1h-1zM208 256h1v1h-1zM573 256h1v1h-1zM584 245h1v1h-1zM230 272h1v1h-1zM220 265h1v1h-1zM565 265h1v1h-1zM224 268h1v1h-1zM38 251h1v1h-1zM578 251h1v1h-1zM976 119h1v1h-1zM31 257h1v1h-1zM572 257h1v1h-1zM777 173h1v1h-1zM853 173h1v1h-1zM216 262h1v1h-1zM568 262h1v1h-1zM29 259h1v1h-1zM590 239h1v1h-1zM739 222h1v2h-1zM750 209h1v1h-1zM30 258h1v1h-1zM211 258h1v1h-1zM571 258h1v1h-1zM794 154h1v1h-1zM938 154h1v2h-1zM779 170h1v2h-1zM785 163h1v1h-1zM965 130h1v2h-1zM789 159h1v1h-1zM145 230h1v1h-1zM742 219h1v1h-1zM740 221h1v1h-1zM215 261h1v1h-1zM569 261h1v1h-1zM743 217h1v2h-1zM598 231h1v1h-1zM592 237h1v1h-1zM792 156h1v1h-1zM937 156h1v1h-1zM771 181h1v1h-1zM233 274h1v1h-1zM205 254h1v1h-1zM575 254h1v1h-1zM221 266h1v1h-1zM564 266h1v1h-1zM770 182h1v2h-1zM746 214h1v1h-1zM980 116h1v1h-1zM745 215h1v1h-1zM861 179h1v1h-1zM871 179h1v1h-1zM753 205h1v1h-1zM581 248h1v1h-1zM597 232h1v1h-1zM679 232h1v1h-1zM776 174h1v2h-1zM856 175h1v1h-1zM738 224h1v1h-1zM585 244h1v1h-1zM601 229h1v1h-1zM150 233h1v1h-1zM596 233h1v1h-1zM780 169h1v1h-1zM219 264h1v1h-1zM566 264h1v1h-1zM787 161h1v1h-1zM236 276h1v1h-1zM791 157h1v1h-1zM936 157h1v1h-1zM225 269h1v1h-1zM939 153h1v1h-1zM604 227h1v1h-1zM588 241h1v1h-1zM595 234h1v1h-1zM153 235h1v1h-1zM594 235h1v1h-1zM964 132h1v1h-1zM773 178h1v1h-1zM860 178h1v1h-1zM945 145h1v1h-1zM959 138h1v2h-1zM582 247h1v1h-1zM748 211h1v1h-1zM589 240h1v1h-1zM940 152h1v1h-1zM979 117h1v1h-1zM764 190h1v2h-1zM783 165h1v1h-1zM778 172h1v1h-1zM761 194h1v1h-1zM790 158h1v1h-1zM935 158h1v1h-1zM591 238h1v1h-1zM967 128h1v1h-1zM756 201h1v1h-1zM583 246h1v1h-1zM580 249h1v1h-1zM781 168h1v1h-1zM593 236h1v1h-1zM786 162h1v1h-1zM928 162h1v1h-1zM767 186h1v2h-1zM33 255h1v1h-1zM574 255h1v1h-1zM607 225h1v1h-1zM744 216h1v1h-1zM788 160h1v1h-1zM37 252h1v1h-1zM577 252h1v1h-1zM943 147h1v2h-1zM747 212h1v2h-1zM774 177h1v1h-1zM793 155h1v1h-1zM775 176h1v1h-1zM857 176h1v1h-1zM975 120h1v1h-1zM1004 120h1v1h-1zM752 206h1v1h-1zM966 129h1v1h-1zM755 202h1v1h-1zM961 136h1v1h-1zM942 149h1v1h-1zM763 192h1v1h-1zM969 125h1v2h-1zM758 198h1v1h-1zM39 250h1v1h-1zM579 250h1v1h-1zM766 188h1v1h-1zM769 184h1v1h-1zM754 203h1v2h-1zM757 199h1v2h-1zM941 150h1v2h-1zM36 253h1v1h-1zM204 253h1v1h-1zM576 253h1v1h-1zM968 127h1v1h-1zM960 137h1v1h-1zM963 133h1v1h-1zM971 123h1v1h-1zM760 195h1v2h-1zM944 146h1v1h-1zM768 185h1v1h-1zM962 134h1v2h-1zM751 207h1v2h-1zM970 124h1v1h-1zM759 197h1v1h-1zM762 193h1v1h-1zM974 121h1v1h-1zM946 144h1v1h-1z" fill="#ffff00" shape-rendering="crispEdges"/>
<path d="M854 219h5v1h-5zM600 196h2v1h-2zM26 260h2v1h-2zM188 260h2v1h-2zM340 260h2v1h-2zM365 260h26v1h-26zM945 131h2v1h-2zM912 115h2v1h-2zM181 256h2v1h-2zM404 256h4v1h-4zM602 195h2v1h-2zM342 259h4v1h-4zM362 259h3v1h-3zM391 259h5v1h-5zM4 264h7v1h-7zM18 264h2v1h-2zM194 264h2v1h-2zM330 264h3v1h-3zM158 242h2v1h-2zM562 242h2v1h-2zM177 254h2v1h-2zM411 254h6v1h-6zM446 254h2v1h-2zM62 222h9v1h-9zM76 222h2v1h-2zM44 236h2v1h-2zM96 236h2v1h-2zM120 236h6v1h-6zM146 236h2v1h-2zM24 261h2v1h-2zM190 261h2v1h-2zM337 261h3v1h-3zM456 261h2v1h-2zM326 266h3v1h-3zM539 266h2v1h-2zM316 271h2v1h-2zM679 271h2v1h-2zM171 250h2v1h-2zM165 246h2v1h-2zM699 246h2v1h-2zM943 130h2v1h-2zM1025 96h3v1h-3zM1030 96h3v1h-3zM106 239h3v1h-3zM110 239h3v1h-3zM152 239h2v1h-2zM608 192h10v1h-10zM174 252h2v1h-2zM421 252h6v1h-6zM439 252h4v1h-4zM690 252h2v1h-2zM225 290h3v1h-3zM286 290h3v1h-3zM495 290h5v1h-5zM509 290h4v1h-4zM922 109h3v1h-3zM1000 109h5v1h-5zM291 288h2v1h-2zM490 288h2v1h-2zM516 288h2v1h-2zM783 126h13v1h-13zM1021 94h2v1h-2zM1035 94h3v1h-3zM198 267h2v1h-2zM938 128h2v1h-2zM981 118h3v1h-3zM322 268h3v1h-3zM60 224h2v1h-2zM81 224h3v1h-3zM20 263h2v1h-2zM333 263h2v1h-2zM427 251h12v1h-12zM692 251h2v1h-2zM919 111h2v1h-2zM262 300h5v1h-5zM185 258h2v1h-2zM346 258h4v1h-4zM357 258h5v1h-5zM396 258h5v1h-5zM452 258h2v1h-2zM667 258h2v1h-2zM222 287h2v1h-2zM293 287h2v1h-2zM487 287h3v1h-3zM101 238h5v1h-5zM113 238h4v1h-4zM150 238h2v1h-2zM126 235h4v1h-4zM144 235h2v1h-2zM598 197h2v1h-2zM71 221h5v1h-5zM130 234h14v1h-14zM917 112h2v1h-2zM991 112h2v1h-2zM606 193h2v1h-2zM618 193h4v1h-4zM244 299h2v1h-2zM267 299h5v1h-5zM236 295h2v1h-2zM277 295h2v1h-2zM39 240h2v1h-2zM154 240h2v1h-2zM476 281h2v1h-2zM217 283h2v1h-2zM479 283h2v1h-2zM84 225h2v1h-2zM725 200h2v1h-2zM314 272h2v1h-2zM914 114h2v1h-2zM988 114h2v1h-2zM308 275h2v1h-2zM210 277h2v1h-2zM305 277h2v1h-2zM213 280h2v1h-2zM525 280h2v1h-2zM168 248h2v1h-2zM289 289h2v1h-2zM492 289h3v1h-3zM513 289h3v1h-3zM202 270h2v1h-2zM318 270h3v1h-3zM417 253h4v1h-4zM443 253h4v1h-4zM11 265h7v1h-7zM636 210h2v1h-2zM306 276h2v1h-2zM469 276h2v1h-2zM156 241h2v1h-2zM483 285h2v1h-2zM98 237h3v1h-3zM117 237h4v1h-4zM148 237h2v1h-2zM163 245h2v1h-2zM54 228h2v1h-2zM859 220h7v1h-7zM78 223h3v1h-3zM655 243h2v1h-2zM295 286h2v1h-2zM485 286h2v1h-2zM179 255h2v1h-2zM408 255h4v1h-4zM448 255h2v1h-2zM972 125h2v1h-2zM312 273h2v1h-2zM979 120h2v1h-2zM940 129h3v1h-3zM993 110h7v1h-7zM247 301h15v1h-15zM228 291h2v1h-2zM284 291h2v1h-2zM500 291h4v1h-4zM506 291h3v1h-3zM232 293h2v1h-2zM280 293h2v1h-2zM238 296h2v1h-2zM275 296h2v1h-2zM230 292h2v1h-2zM282 292h2v1h-2zM504 292h2v1h-2zM472 278h2v1h-2zM527 278h2v1h-2zM22 262h2v1h-2zM335 262h2v1h-2zM935 127h3v1h-3zM51 230h2v1h-2zM1028 97h2v1h-2zM604 194h2v1h-2zM985 116h2v1h-2zM161 244h2v1h-2zM695 249h2v1h-2zM183 257h2v1h-2zM350 257h3v1h-3zM354 257h3v1h-3zM401 257h3v1h-3zM1018 93h3v1h-3zM1038 93h2v1h-2zM234 294h2v1h-2zM242 298h2v1h-2zM271 298h3v1h-3zM846 212h2v1h-2zM310 274h2v1h-2zM481 284h2v1h-2zM1004 108h2v1h-2zM240 297h2v1h-2zM1023 95h2v1h-2zM1033 95h2v1h-2zM807 144h2v1h-2zM57 226h2v1h-2zM85 226h2v1h-2zM958 145h2v1h-2zM976 122h2v1h-2zM1016 92h2v1h-2zM49 232h1v1h-1zM92 232h1v1h-1zM569 232h1v2h-1zM651 231h1v2h-1zM709 232h1v2h-1zM578 219h1v2h-1zM646 219h1v3h-1zM716 219h1v2h-1zM866 218h1v2h-1zM623 195h1v2h-1zM728 196h1v2h-1zM835 195h1v2h-1zM874 195h1v3h-1zM455 260h1v1h-1zM546 260h1v1h-1zM670 260h1v2h-1zM686 260h1v2h-1zM779 131h1v1h-1zM799 131h1v1h-1zM900 130h1v2h-1zM968 130h1v2h-1zM594 201h1v1h-1zM628 201h1v1h-1zM725 201h1v2h-1zM838 200h1v2h-1zM872 201h1v3h-1zM928 115h1v1h-1zM987 115h1v1h-1zM30 255h1v2h-1zM353 256h1v1h-1zM450 256h1v1h-1zM550 256h1v1h-1zM666 256h1v1h-1zM689 255h1v2h-1zM775 135h1v1h-1zM802 135h1v1h-1zM898 134h1v2h-1zM950 135h1v2h-1zM965 135h1v2h-1zM768 142h1v1h-1zM807 142h1v2h-1zM894 142h1v2h-1zM955 141h1v2h-1zM961 142h1v1h-1zM50 231h1v1h-1zM91 231h1v1h-1zM570 231h1v1h-1zM710 230h1v2h-1zM747 167h1v2h-1zM821 168h1v2h-1zM883 168h1v3h-1zM729 194h1v2h-1zM27 259h1v1h-1zM187 259h1v1h-1zM454 259h1v1h-1zM547 259h1v1h-1zM669 259h1v1h-1zM687 259h1v1h-1zM460 264h1v2h-1zM542 264h1v1h-1zM673 264h1v1h-1zM684 264h1v1h-1zM38 242h1v2h-1zM704 241h1v2h-1zM31 254h1v1h-1zM552 254h1v1h-1zM665 254h1v2h-1zM690 253h1v2h-1zM749 165h1v1h-1zM819 164h1v2h-1zM884 165h1v3h-1zM754 158h1v2h-1zM816 158h1v2h-1zM886 159h1v3h-1zM576 222h1v1h-1zM647 222h1v2h-1zM714 222h1v2h-1zM567 235h1v2h-1zM653 236h1v2h-1zM707 235h1v2h-1zM545 261h1v1h-1zM197 266h1v1h-1zM461 266h1v1h-1zM675 266h1v1h-1zM683 265h1v2h-1zM204 271h1v1h-1zM465 270h1v2h-1zM535 271h1v1h-1zM909 119h1v1h-1zM931 119h1v2h-1zM981 119h1v1h-1zM739 177h1v2h-1zM825 176h1v2h-1zM880 177h1v3h-1zM33 250h1v2h-1zM434 250h1v1h-1zM556 250h1v1h-1zM661 249h1v2h-1zM694 250h1v1h-1zM36 245h1v2h-1zM559 246h1v1h-1zM658 246h1v1h-1zM780 130h1v1h-1zM798 129h1v2h-1zM755 157h1v1h-1zM815 156h1v2h-1zM887 156h1v3h-1zM1014 96h1v1h-1zM41 239h1v1h-1zM565 239h1v1h-1zM654 238h1v2h-1zM705 239h1v2h-1zM730 192h1v2h-1zM833 192h1v1h-1zM875 192h1v3h-1zM32 252h1v2h-1zM554 252h1v1h-1zM663 252h1v1h-1zM735 184h1v1h-1zM829 184h1v2h-1zM878 183h1v3h-1zM911 116h1v2h-1zM929 116h1v2h-1zM984 117h1v1h-1zM224 288h1v1h-1zM903 126h1v2h-1zM935 126h1v1h-1zM971 126h1v1h-1zM1015 94h1v2h-1zM325 267h1v1h-1zM462 267h1v1h-1zM539 267h1v1h-1zM676 267h1v1h-1zM682 267h1v2h-1zM782 128h1v1h-1zM797 128h1v1h-1zM902 128h1v1h-1zM969 128h1v2h-1zM910 118h1v1h-1zM930 118h1v1h-1zM200 268h1v1h-1zM463 268h1v1h-1zM538 268h1v1h-1zM677 268h1v2h-1zM574 224h1v2h-1zM648 224h1v2h-1zM713 224h1v2h-1zM736 182h1v2h-1zM828 182h1v2h-1zM879 180h1v3h-1zM193 263h1v1h-1zM459 263h1v1h-1zM543 263h1v1h-1zM672 263h1v1h-1zM685 262h1v2h-1zM173 251h1v1h-1zM555 251h1v1h-1zM662 251h1v1h-1zM738 179h1v1h-1zM826 178h1v2h-1zM925 110h1v2h-1zM993 111h1v1h-1zM35 247h1v2h-1zM167 247h1v1h-1zM558 247h1v1h-1zM659 247h1v1h-1zM698 247h1v1h-1zM246 300h1v1h-1zM778 132h1v1h-1zM800 132h1v2h-1zM899 132h1v2h-1zM947 132h1v1h-1zM967 132h1v1h-1zM28 258h1v1h-1zM548 258h1v1h-1zM688 257h1v2h-1zM518 287h1v1h-1zM42 238h1v1h-1zM566 237h1v2h-1zM706 237h1v2h-1zM46 235h1v1h-1zM95 235h1v1h-1zM652 233h1v3h-1zM624 197h1v1h-1zM836 197h1v2h-1zM734 185h1v2h-1zM830 186h1v3h-1zM877 186h1v3h-1zM577 221h1v1h-1zM715 221h1v1h-1zM592 203h1v2h-1zM630 203h1v2h-1zM724 203h1v2h-1zM840 204h1v2h-1zM871 204h1v2h-1zM47 234h1v1h-1zM94 234h1v1h-1zM568 234h1v1h-1zM708 234h1v1h-1zM56 227h1v1h-1zM87 227h1v1h-1zM572 227h1v2h-1zM649 226h1v3h-1zM712 226h1v2h-1zM579 218h1v1h-1zM645 218h1v1h-1zM717 217h1v2h-1zM853 218h1v1h-1zM926 112h1v1h-1zM834 193h1v2h-1zM109 240h1v1h-1zM564 240h1v2h-1zM655 240h1v2h-1zM215 281h1v1h-1zM301 281h1v1h-1zM524 281h1v1h-1zM751 162h1v2h-1zM818 162h1v2h-1zM885 162h1v3h-1zM299 283h1v1h-1zM522 283h1v1h-1zM59 225h1v1h-1zM588 208h1v1h-1zM634 208h1v1h-1zM722 207h1v2h-1zM842 207h1v2h-1zM870 206h1v3h-1zM595 200h1v1h-1zM627 200h1v1h-1zM873 198h1v3h-1zM591 205h1v1h-1zM631 205h1v1h-1zM723 205h1v2h-1zM205 272h1v1h-1zM466 272h1v1h-1zM534 272h1v1h-1zM679 272h1v1h-1zM927 113h1v2h-1zM208 275h1v1h-1zM469 275h1v1h-1zM531 275h1v1h-1zM762 148h1v1h-1zM810 147h1v2h-1zM891 148h1v2h-1zM471 277h1v1h-1zM529 277h1v1h-1zM302 280h1v1h-1zM475 280h1v1h-1zM743 172h1v2h-1zM823 172h1v2h-1zM882 171h1v3h-1zM213 279h1v1h-1zM303 279h1v1h-1zM474 279h1v1h-1zM527 279h1v1h-1zM1008 104h1v1h-1zM557 248h1v2h-1zM660 248h1v1h-1zM697 248h1v1h-1zM225 289h1v1h-1zM585 211h1v1h-1zM638 211h1v1h-1zM720 211h1v2h-1zM845 211h1v1h-1zM869 209h1v3h-1zM536 270h1v1h-1zM678 270h1v1h-1zM681 269h1v2h-1zM176 253h1v1h-1zM553 253h1v1h-1zM664 253h1v1h-1zM196 265h1v1h-1zM329 265h1v1h-1zM541 265h1v1h-1zM674 265h1v1h-1zM593 202h1v1h-1zM629 202h1v1h-1zM839 202h1v2h-1zM905 124h1v1h-1zM934 124h1v2h-1zM974 124h1v1h-1zM586 210h1v1h-1zM721 209h1v2h-1zM844 210h1v1h-1zM587 209h1v1h-1zM635 209h1v1h-1zM843 209h1v1h-1zM583 214h1v1h-1zM641 214h1v1h-1zM719 213h1v2h-1zM849 214h1v1h-1zM868 212h1v3h-1zM209 276h1v1h-1zM530 276h1v1h-1zM39 241h1v1h-1zM741 175h1v1h-1zM824 174h1v2h-1zM881 174h1v3h-1zM760 150h1v2h-1zM811 149h1v2h-1zM890 150h1v2h-1zM220 285h1v1h-1zM297 285h1v1h-1zM520 285h1v1h-1zM43 237h1v1h-1zM757 154h1v2h-1zM814 155h1v1h-1zM888 153h1v3h-1zM740 176h1v1h-1zM737 180h1v2h-1zM827 180h1v2h-1zM560 245h1v1h-1zM657 244h1v2h-1zM701 245h1v1h-1zM590 206h1v1h-1zM632 206h1v1h-1zM841 206h1v1h-1zM88 228h1v1h-1zM711 228h1v2h-1zM589 207h1v1h-1zM633 207h1v1h-1zM62 223h1v1h-1zM575 223h1v1h-1zM767 143h1v1h-1zM956 143h1v1h-1zM960 143h1v2h-1zM160 243h1v1h-1zM562 243h1v1h-1zM703 243h1v1h-1zM221 286h1v1h-1zM519 286h1v1h-1zM551 255h1v1h-1zM904 125h1v1h-1zM206 273h1v1h-1zM467 273h1v1h-1zM533 273h1v1h-1zM216 282h1v1h-1zM300 282h1v1h-1zM478 282h1v1h-1zM523 282h1v1h-1zM908 120h1v1h-1zM781 129h1v1h-1zM901 129h1v1h-1zM774 136h1v1h-1zM803 136h1v2h-1zM897 136h1v2h-1zM921 110h1v1h-1zM771 139h1v1h-1zM805 139h1v2h-1zM896 138h1v2h-1zM953 139h1v1h-1zM963 138h1v2h-1zM212 278h1v1h-1zM304 278h1v1h-1zM192 262h1v1h-1zM458 262h1v1h-1zM544 262h1v1h-1zM671 262h1v1h-1zM1007 105h1v2h-1zM783 127h1v1h-1zM796 127h1v1h-1zM970 127h1v1h-1zM90 230h1v1h-1zM571 229h1v2h-1zM650 229h1v2h-1zM777 133h1v1h-1zM948 133h1v1h-1zM966 133h1v2h-1zM1013 97h1v1h-1zM769 141h1v1h-1zM806 141h1v1h-1zM895 140h1v2h-1zM962 140h1v2h-1zM744 171h1v1h-1zM822 170h1v2h-1zM622 194h1v1h-1zM581 216h1v1h-1zM643 216h1v1h-1zM718 215h1v2h-1zM851 216h1v1h-1zM867 215h1v3h-1zM746 169h1v1h-1zM745 170h1v1h-1zM37 244h1v1h-1zM561 244h1v1h-1zM702 244h1v1h-1zM742 174h1v1h-1zM906 123h1v1h-1zM933 123h1v1h-1zM975 123h1v1h-1zM34 249h1v1h-1zM170 249h1v1h-1zM812 151h1v2h-1zM761 149h1v1h-1zM756 156h1v1h-1zM29 257h1v1h-1zM451 257h1v1h-1zM549 257h1v1h-1zM667 257h1v1h-1zM764 146h1v1h-1zM809 145h1v2h-1zM892 146h1v2h-1zM958 146h1v1h-1zM1016 93h1v1h-1zM48 233h1v1h-1zM93 233h1v1h-1zM279 294h1v1h-1zM748 166h1v1h-1zM820 166h1v2h-1zM584 212h1v2h-1zM639 212h1v1h-1zM772 138h1v1h-1zM804 138h1v1h-1zM952 138h1v1h-1zM759 152h1v1h-1zM889 152h1v1h-1zM776 134h1v1h-1zM801 134h1v1h-1zM949 134h1v1h-1zM596 199h1v1h-1zM626 199h1v1h-1zM727 198h1v2h-1zM837 199h1v1h-1zM770 140h1v1h-1zM954 140h1v1h-1zM53 229h1v1h-1zM89 229h1v1h-1zM1011 100h1v1h-1zM207 274h1v1h-1zM468 274h1v1h-1zM532 274h1v1h-1zM219 284h1v1h-1zM298 284h1v1h-1zM521 284h1v1h-1zM923 108h1v1h-1zM582 215h1v1h-1zM642 215h1v1h-1zM850 215h1v1h-1zM580 217h1v1h-1zM644 217h1v1h-1zM852 217h1v1h-1zM274 297h1v1h-1zM597 198h1v1h-1zM625 198h1v1h-1zM640 213h1v1h-1zM848 213h1v1h-1zM733 187h1v2h-1zM916 113h1v1h-1zM990 113h1v1h-1zM766 144h1v1h-1zM893 144h1v2h-1zM957 144h1v1h-1zM773 137h1v1h-1zM951 137h1v1h-1zM964 137h1v1h-1zM1012 98h1v2h-1zM813 153h1v2h-1zM731 191h1v1h-1zM832 190h1v2h-1zM876 189h1v3h-1zM1006 107h1v1h-1zM201 269h1v1h-1zM321 269h1v1h-1zM464 269h1v1h-1zM537 269h1v1h-1zM573 226h1v1h-1zM765 145h1v1h-1zM732 189h1v2h-1zM831 189h1v1h-1zM753 160h1v1h-1zM817 160h1v2h-1zM758 153h1v1h-1zM907 121h1v2h-1zM932 121h1v2h-1zM978 121h1v1h-1zM752 161h1v1h-1zM763 147h1v1h-1zM750 164h1v1h-1zM1010 101h1v2h-1zM1009 103h1v1h-1z" fill="#ffffff" shape-rendering="crispEdges"/>
<g shape-rendering="crispEdges" fill="#ff00ff">
<rect x="2" y="25" width="3" height="3"/>
<rect x="13" y="25" width="3" height="3"/>
<rect x="25" y="25" width="3" height="3"/>
<rect x="72" y="25" width="3" height="3"/>
<rect x="304" y="25" width="3" height="3"/>
<rect x="374" y="25" width="3" height="3"/>
<rect x="444" y="25" width="3" height="3"/>
<rect x="456" y="25" width="3" height="3"/>
<rect x="479" y="25" width="3" height="3"/>
<rect x="514" y="25" width="3" height="3"/>
<rect x="595" y="25" width="3" height="3"/>
<rect x="618" y="25" width="3" height="3"/>
<rect x="653" y="25" width="3" height="3"/>
<rect x="688" y="25" width="3" height="3"/>
<rect x="700" y="25" width="3" height="3"/>
<rect x="874" y="25" width="3" height="3"/>
<rect x="886" y="25" width="3" height="3"/>
<rect x="898" y="25" width="3" height="3"/>
<rect x="921" y="25" width="3" height="3"/>
<rect x="933" y="25" width="3" height="3"/>
<rect x="944" y="25" width="3" height="3"/>
<rect x="968" y="25" width="3" height="3"/>
<rect x="979" y="25" width="3" height="3"/>
<rect x="991" y="25" width="3" height="3"/>
<rect x="1002" y="25" width="3" height="3"/>
<rect x="1014" y="25" width="3" height="3"/>
<rect x="1026" y="25" width="3" height="3"/>
</g>
<g shape-rendering="crispEdges">
<rect x="-1" y="478" width="11" height="11" fill="url(#gc)"/>
<rect x="10" y="467" width="11" height="10" fill="url(#gr)"/>
<rect x="13" y="470" width="5" height="7" fill="#5a0008"/>
<rect x="22" y="464" width="11" height="13" fill="url(#gr)"/>
<rect x="34" y="449" width="11" height="28" fill="url(#gr)"/>
<rect x="45" y="478" width="11" height="22" fill="url(#gc)"/>
<rect x="57" y="478" width="11" height="17" fill="url(#gc)"/>
<rect x="69" y="478" width="11" height="2" fill="url(#gc)"/>
<rect x="72" y="475" width="5" height="2" fill="#5a0008"/>
<rect x="80" y="476" width="11" height="1" fill="url(#gr)"/>
<rect x="83" y="473" width="5" height="4" fill="#5a0008"/>
<rect x="92" y="467" width="11" height="10" fill="url(#gr)"/>
<rect x="95" y="475" width="5" height="2" fill="#5a0008"/>
<rect x="104" y="470" width="11" height="7" fill="url(#gr)"/>
<rect x="107" y="473" width="5" height="4" fill="#5a0008"/>
<rect x="115" y="478" width="11" height="4" fill="url(#gc)"/>
<rect x="130" y="473" width="5" height="4" fill="#5a0008"/>
<rect x="138" y="478" width="11" height="7" fill="url(#gc)"/>
<rect x="150" y="476" width="11" height="1" fill="url(#gr)"/>
<rect x="162" y="478" width="11" height="1" fill="url(#gc)"/>
<rect x="185" y="478" width="11" height="4" fill="url(#gc)"/>
<rect x="197" y="478" width="11" height="7" fill="url(#gc)"/>
<rect x="208" y="478" width="11" height="1" fill="url(#gc)"/>
<rect x="220" y="478" width="11" height="2" fill="url(#gc)"/>
<rect x="223" y="475" width="5" height="2" fill="#5a0008"/>
<rect x="232" y="470" width="11" height="7" fill="url(#gr)"/>
<rect x="235" y="474" width="5" height="3" fill="#5a0008"/>
<rect x="243" y="476" width="11" height="1" fill="url(#gr)"/>
<rect x="255" y="475" width="11" height="2" fill="url(#gr)"/>
<rect x="269" y="475" width="5" height="2" fill="#5a0008"/>
<rect x="278" y="473" width="11" height="4" fill="url(#gr)"/>
<rect x="281" y="475" width="5" height="2" fill="#5a0008"/>
<rect x="290" y="475" width="11" height="2" fill="url(#gr)"/>
<rect x="293" y="473" width="5" height="4" fill="#5a0008"/>
<rect x="301" y="468" width="11" height="9" fill="url(#gr)"/>
<rect x="304" y="472" width="5" height="5" fill="#5a0008"/>
<rect x="313" y="473" width="11" height="4" fill="url(#gr)"/>
<rect x="316" y="474" width="5" height="3" fill="#5a0008"/>
<rect x="325" y="473" width="11" height="4" fill="url(#gr)"/>
<rect x="328" y="475" width="5" height="2" fill="#5a0008"/>
<rect x="336" y="473" width="11" height="4" fill="url(#gr)"/>
<rect x="339" y="475" width="5" height="2" fill="#5a0008"/>
<rect x="348" y="476" width="11" height="1" fill="url(#gr)"/>
<rect x="360" y="478" width="11" height="8" fill="url(#gc)"/>
<rect x="371" y="478" width="11" height="1" fill="url(#gc)"/>
<rect x="386" y="474" width="5" height="3" fill="#5a0008"/>
<rect x="394" y="476" width="11" height="1" fill="url(#gr)"/>
<rect x="406" y="469" width="11" height="8" fill="url(#gr)"/>
<rect x="409" y="472" width="5" height="5" fill="#5a0008"/>
<rect x="418" y="478" width="11" height="8" fill="url(#gc)"/>
<rect x="429" y="478" width="11" height="2" fill="url(#gc)"/>
<rect x="441" y="478" width="11" height="7" fill="url(#gc)"/>
<rect x="453" y="478" width="11" height="4" fill="url(#gc)"/>
<rect x="464" y="478" width="11" height="2" fill="url(#gc)"/>
<rect x="476" y="473" width="11" height="4" fill="url(#gr)"/>
<rect x="490" y="475" width="5" height="2" fill="#5a0008"/>
<rect x="499" y="471" width="11" height="6" fill="url(#gr)"/>
<rect x="502" y="474" width="5" height="3" fill="#5a0008"/>
<rect x="511" y="473" width="11" height="4" fill="url(#gr)"/>
<rect x="522" y="469" width="11" height="8" fill="url(#gr)"/>
<rect x="525" y="474" width="5" height="3" fill="#5a0008"/>
<rect x="534" y="467" width="11" height="10" fill="url(#gr)"/>
<rect x="537" y="472" width="5" height="5" fill="#5a0008"/>
<rect x="546" y="474" width="11" height="3" fill="url(#gr)"/>
<rect x="549" y="475" width="5" height="2" fill="#5a0008"/>
<rect x="557" y="469" width="11" height="8" fill="url(#gr)"/>
<rect x="560" y="472" width="5" height="5" fill="#5a0008"/>
<rect x="569" y="449" width="11" height="28" fill="url(#gr)"/>
<rect x="581" y="478" width="11" height="2" fill="url(#gc)"/>
<rect x="592" y="470" width="11" height="7" fill="url(#gr)"/>
<rect x="604" y="478" width="11" height="14" fill="url(#gc)"/>
<rect x="615" y="478" width="11" height="6" fill="url(#gc)"/>
<rect x="627" y="478" width="11" height="8" fill="url(#gc)"/>
<rect x="639" y="478" width="11" height="2" fill="url(#gc)"/>
<rect x="650" y="478" width="11" height="8" fill="url(#gc)"/>
<rect x="662" y="478" width="11" height="4" fill="url(#gc)"/>
<rect x="674" y="474" width="11" height="3" fill="url(#gr)"/>
<rect x="685" y="438" width="11" height="39" fill="url(#gr)"/>
<rect x="697" y="478" width="11" height="57" fill="url(#gc)"/>
<rect x="709" y="467" width="11" height="10" fill="url(#gr)"/>
<rect x="712" y="468" width="5" height="9" fill="#5a0008"/>
<rect x="720" y="478" width="11" height="1" fill="url(#gc)"/>
<rect x="732" y="457" width="11" height="20" fill="url(#gr)"/>
<rect x="735" y="470" width="5" height="7" fill="#5a0008"/>
<rect x="743" y="433" width="11" height="44" fill="url(#gr)"/>
<rect x="746" y="470" width="5" height="7" fill="#5a0008"/>
<rect x="755" y="478" width="11" height="16" fill="url(#gc)"/>
<rect x="767" y="478" width="11" height="6" fill="url(#gc)"/>
<rect x="778" y="478" width="11" height="1" fill="url(#gc)"/>
<rect x="790" y="478" width="11" height="31" fill="url(#gc)"/>
<rect x="802" y="478" width="11" height="9" fill="url(#gc)"/>
<rect x="813" y="478" width="11" height="18" fill="url(#gc)"/>
<rect x="825" y="478" width="11" height="14" fill="url(#gc)"/>
<rect x="837" y="465" width="11" height="12" fill="url(#gr)"/>
<rect x="840" y="472" width="5" height="5" fill="#5a0008"/>
<rect x="848" y="478" width="11" height="2" fill="url(#gc)"/>
<rect x="860" y="469" width="11" height="8" fill="url(#gr)"/>
<rect x="871" y="435" width="11" height="42" fill="url(#gr)"/>
<rect x="883" y="478" width="11" height="49" fill="url(#gc)"/>
<rect x="895" y="478" width="11" height="22" fill="url(#gc)"/>
<rect x="906" y="478" width="11" height="22" fill="url(#gc)"/>
<rect x="918" y="478" width="11" height="22" fill="url(#gc)"/>
<rect x="933" y="472" width="5" height="5" fill="#5a0008"/>
<rect x="941" y="440" width="11" height="37" fill="url(#gr)"/>
<rect x="944" y="472" width="5" height="5" fill="#5a0008"/>
<rect x="953" y="478" width="11" height="22" fill="url(#gc)"/>
<rect x="965" y="390" width="11" height="87" fill="url(#gr)"/>
<rect x="976" y="478" width="11" height="64" fill="url(#gc)"/>
<rect x="988" y="461" width="11" height="16" fill="url(#gr)"/>
<rect x="999" y="469" width="11" height="8" fill="url(#gr)"/>
<rect x="1011" y="478" width="11" height="22" fill="url(#gc)"/>
<rect x="1023" y="465" width="11" height="12" fill="url(#gr)"/>
<rect x="1034" y="468" width="11" height="9" fill="url(#gr)"/>
<rect x="1037" y="463" width="5" height="14" fill="#5a0008"/>
<rect x="4" y="477" width="1036" height="1" fill="#ff0000"/>
</g>
<rect x="38" y="462" width="3" height="16" fill="#ffff00" shape-rendering="crispEdges"/>
<use href="#sm" x="40" y="470"/>
<rect x="573" y="468" width="3" height="10" fill="#ffff00" shape-rendering="crispEdges"/>
<use href="#sm" x="575" y="476"/>
<rect x="596" y="477" width="3" height="1" fill="#ffff00" shape-rendering="crispEdges"/>
<use href="#sm" x="598" y="485"/>
<rect x="689" y="464" width="3" height="14" fill="#ffff00" shape-rendering="crispEdges"/>
<use href="#sm" x="691" y="472"/>
<rect x="875" y="458" width="3" height="20" fill="#ffff00" shape-rendering="crispEdges"/>
<use href="#sm" x="877" y="466"/>
<rect x="969" y="439" width="3" height="39" fill="#ffff00" shape-rendering="crispEdges"/>
<use href="#sm" x="971" y="447"/>
<g shape-rendering="crispEdges"><path d="M451 354H462L464 356V367H451Z" fill="#004080"/><path d="M963 354H975V367H963Z" fill="#800000"/><path d="M975 354H986L988 356V367H975Z" fill="#008080"/></g>
<text class="mk" x="452" y="364.6" fill="#ffffff">财</text>
<text class="mk" x="963.6" y="364.6" fill="#ffffff">涨</text>
<text class="mk" x="976" y="364.6" fill="#ffffff">解</text>
<circle cx="96" cy="15" r="6" fill="#808080"/><path d="M93 14l3 3l3-3" fill="none" stroke="#101018" stroke-width="1.4"/>
<circle cx="7" cy="377" r="6" fill="#808080"/><path d="M4 376l3 3l3-3" fill="none" stroke="#101018" stroke-width="1.4"/>
<text x="2" y="19" fill="#c8c8c8" textLength="82" lengthAdjust="spacingAndGlyphs" xml:space="preserve">英特集团 (日线)</text>
<text x="107" y="19" fill="#e6e6e6" textLength="64" lengthAdjust="spacingAndGlyphs" xml:space="preserve">MA5: 12.90</text>
<text x="176.7" y="19" fill="#e6e600" textLength="71.5" lengthAdjust="spacingAndGlyphs" xml:space="preserve">MA10: 12.78</text>
<text x="253.5" y="19" fill="#ff00ff" textLength="71.5" lengthAdjust="spacingAndGlyphs" xml:space="preserve">MA20: 12.51</text>
<text x="330" y="19" fill="#00e600" textLength="72" lengthAdjust="spacingAndGlyphs" xml:space="preserve">MA60: 11.97</text>
<text x="407" y="19" fill="#c0c0c0" textLength="78" lengthAdjust="spacingAndGlyphs" xml:space="preserve">MA120: 11.65</text>
<text x="491" y="19" fill="#0000ff" textLength="78.5" lengthAdjust="spacingAndGlyphs" xml:space="preserve">MA250: 11.10</text>
<text x="17" y="381" fill="#c8c8c8" textLength="71" lengthAdjust="spacingAndGlyphs" xml:space="preserve">筹码进出量副</text>
<text x="94.7" y="381" fill="#e6e6e6" textLength="75.3" lengthAdjust="spacingAndGlyphs" xml:space="preserve">特大: 5314.90</text>
<text x="175.5" y="381" fill="#e6e600" textLength="89.5" lengthAdjust="spacingAndGlyphs" xml:space="preserve">大单: 135539.72</text>
<text x="270.6" y="381" fill="#ff00ff" textLength="82.4" lengthAdjust="spacingAndGlyphs" xml:space="preserve">中单: 39864.76</text>
<text x="358" y="381" fill="#00e600" textLength="82" lengthAdjust="spacingAndGlyphs" xml:space="preserve">小单: 50495.31</text>
<text x="446" y="381" fill="#ff00ff" textLength="85" lengthAdjust="spacingAndGlyphs" xml:space="preserve">主力持仓: 77.20</text>
<text x="538" y="381" fill="#ff0000" textLength="120" lengthAdjust="spacingAndGlyphs" xml:space="preserve">主力筹码集中度: 72.87</text>
<text x="238.7" y="344" fill="#c0c0c0" textLength="31" lengthAdjust="spacingAndGlyphs" xml:space="preserve">10.67</text>
<text x="974.7" y="39" fill="#c0c0c0" textLength="30" lengthAdjust="spacingAndGlyphs" xml:space="preserve">13.49</text>
<path d="M226 339.5H237M229 336.5L226 339.5L229 342.5" fill="none" stroke="#c0c0c0" stroke-width="1"/>
<path d="M1007 32L1027 29M1022.5 27L1027 29L1023.5 32.5" fill="none" stroke="#c0c0c0" stroke-width="1"/>
<path d="M1048 15.5L1053.5 10L1059 15.5L1053.5 21Z" fill="none" stroke="#666666" stroke-width="1"/>
<rect x="888" y="484" width="168" height="55" fill="#ffffff"/>
<text class="wm1" x="921.6" y="509.2" fill="#dc1e3c" textLength="84" lengthAdjust="spacingAndGlyphs">好公式网</text>
<text class="wm2" x="894.5" y="526.3" fill="#3232b4" textLength="157.8" lengthAdjust="spacingAndGlyphs">www.goodgongshi.com</text>
</svg></body></html>
